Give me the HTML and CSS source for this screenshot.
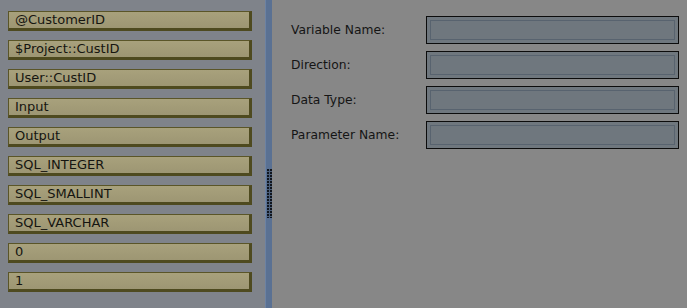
FILE: index.html
```html
<!DOCTYPE html>
<html>
<head>
    <meta name="viewport" content="width=device-width, initial-scale=1.0">
    <title>Parameter Mapping</title>
    <link rel="stylesheet" href="styles.css">
</head>
<body>
    <div class="layout">
        <div class="toolbox">
            <div class="chip">@CustomerID</div>
            <div class="chip">$Project::CustID</div>
            <div class="chip">User::CustID</div>
            <div class="chip">Input</div>
            <div class="chip">Output</div>
            <div class="chip">SQL_INTEGER</div>
            <div class="chip">SQL_SMALLINT</div>
            <div class="chip">SQL_VARCHAR</div>
            <div class="chip">0</div>
            <div class="chip">1</div>
        </div>

        <div class="splitter">
            <div class="grip"></div>
        </div>

        <div class="form">
            <label class="field-label">Variable Name:</label>
            <div class="drop-box"></div>
            <label class="field-label">Direction:</label>
            <div class="drop-box"></div>
            <label class="field-label">Data Type:</label>
            <div class="drop-box"></div>
            <label class="field-label">Parameter Name:</label>
            <div class="drop-box"></div>
        </div>
    </div>
</body>
</html>
```

FILE: styles.css
```css
body {
    margin: 0;
    font-family: "DejaVu Sans", Verdana, sans-serif;
    background-color: #878787;
}
.layout {
    display: flex;
    height: 308px;
}
.toolbox {
    width: 257px;
    padding: 11px 0 0 8px;
    background-color: #7f838a;
    display: flex;
    flex-direction: column;
    gap: 9px;
}
.chip {
    box-sizing: border-box;
    width: 244px;
    height: 20px;
    padding-left: 6px;
    line-height: 16px;
    font-size: 13px;
    color: #151510;
    background: linear-gradient(#a8a17c, #9d9673);
    border-top: 1px solid #5a5528;
    border-left: 1px solid #5a5528;
    border-right: 3px solid #4e4a1f;
    border-bottom: 3px solid #4e4a1f;
}
.splitter {
    width: 7px;
    background-color: #5a7193;
    border-left: 1px solid #6c82a3;
    box-sizing: border-box;
    display: flex;
    align-items: flex-start;
    justify-content: center;
}
.grip {
    margin-top: 169px;
    width: 5px;
    height: 49px;
    background-image:
        linear-gradient(90deg, transparent 2px, #4c5f7a 2px),
        linear-gradient(#10151d 2px, #4c5f7a 2px);
    background-size: 3px 3px;
}
.form {
    flex: 1;
    padding: 16px 8px 0 19px;
    display: grid;
    grid-template-columns: 135px 1fr;
    grid-auto-rows: 28px;
    row-gap: 7px;
    align-items: center;
    align-content: start;
}
.field-label {
    font-size: 12.3px;
    color: #151515;
}
.drop-box {
    height: 28px;
    box-sizing: border-box;
    border: 1px solid #0c0c0c;
    background-color: #6f777e;
    box-shadow: inset 0 0 0 3px #6f777e, inset 0 0 0 4px #58636f;
}
```
